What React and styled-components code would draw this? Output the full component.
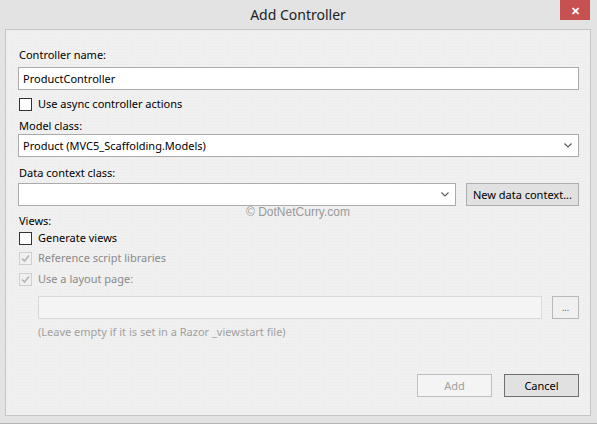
import styled, { createGlobalStyle } from "styled-components";

const GlobalStyle = createGlobalStyle`
  html, body {
    margin: 0;
    padding: 0;
    background: #e3e3e3;
  }
  body {
    font-family: "Noto Sans", "Open Sans", sans-serif;
    font-size: 11px;
    color: #000;
  }
`;

const Chevron = () => (
  <svg width="8" height="5" viewBox="0 0 8 5">
    <path d="M0.5 0.5 L4 4 L7.5 0.5" fill="none" stroke="#606060" strokeWidth="1.2" />
  </svg>
);

const Check = ({ disabled }) => (
  <svg width="11" height="11" viewBox="0 0 11 11">
    <path
      d="M2 5.5 L4.5 8 L9 2.5"
      fill="none"
      stroke={disabled ? "#b4b4b4" : "#333"}
      strokeWidth="1.6"
    />
  </svg>
);

const CheckRow = ({ checked, disabled, children, top }) => (
  <CheckLine top={top}>
    <Box disabled={disabled}>{checked && <Check disabled={disabled} />}</Box>
    <CheckText disabled={disabled}>{children}</CheckText>
  </CheckLine>
);

export default function App() {
  return (
    <>
      <GlobalStyle />
      <Window>
        <TitleBar>
          <Title>Add Controller</Title>
          <Close>✕</Close>
        </TitleBar>
        <Panel>
          <Label top={17}>Controller name:</Label>
          <Field top={4}>ProductController</Field>
          <CheckRow top={7}>Use async controller actions</CheckRow>
          <Label top={7}>Model class:</Label>
          <Select top={0}>
            Product (MVC5_Scaffolding.Models)
            <Chevron />
          </Select>
          <Label top={8}>Data context class:</Label>
          <Row top={2}>
            <Select grow>
              <span />
              <Chevron />
            </Select>
            <Button>New data context...</Button>
          </Row>
          <Watermark>© DotNetCurry.com</Watermark>
          <Label top={7}>Views:</Label>
          <CheckRow top={2}>Generate views</CheckRow>
          <CheckRow top={6} checked disabled>
            Reference script libraries
          </CheckRow>
          <CheckRow top={7} checked disabled>
            Use a layout page:
          </CheckRow>
          <Indent>
            <Row top={10}>
              <Field disabled grow />
              <SmallButton>...</SmallButton>
            </Row>
            <Hint>(Leave empty if it is set in a Razor _viewstart file)</Hint>
          </Indent>
          <Footer>
            <Button disabled wide>
              Add
            </Button>
            <Button dark wide>
              Cancel
            </Button>
          </Footer>
        </Panel>
      </Window>
    </>
  );
}

const Window = styled.div`
  width: 597px;
  height: 424px;
  box-sizing: border-box;
  display: flex;
  flex-direction: column;
  background: #e3e3e3;
  padding: 0 6px 7px 5px;
  border-bottom: 1px solid #b4b4b4;
`;

const TitleBar = styled.div`
  position: relative;
  height: 29px;
  display: flex;
  align-items: center;
  justify-content: center;
`;

const Title = styled.div`
  font-size: 14px;
  color: #222;
  margin-top: -1px;
`;

const Close = styled.div`
  position: absolute;
  top: 0;
  right: 1px;
  width: 30px;
  height: 20px;
  background: #c75050;
  color: #fff;
  font-size: 11px;
  font-weight: bold;
  display: flex;
  align-items: center;
  justify-content: center;
`;

const Panel = styled.div`
  position: relative;
  flex: 1;
  display: flex;
  flex-direction: column;
  border: 1px solid #c6c6c6;
  background-color: #f0f0f0;
  background-image: radial-gradient(#e9e9e9 0.6px, transparent 0.8px);
  background-size: 3px 3px;
  padding: 0 11px 0 12px;
`;

const Label = styled.div`
  margin-top: ${(p) => p.top}px;
  height: 16px;
  line-height: 16px;
  padding-left: 1px;
`;

const Field = styled.div`
  margin-top: ${(p) => p.top || 0}px;
  height: 23px;
  box-sizing: border-box;
  flex: ${(p) => (p.grow ? 1 : "none")};
  border: 1px solid ${(p) => (p.disabled ? "#d9d9d9" : "#ababab")};
  background: ${(p) => (p.disabled ? "#f4f4f4" : "#fff")};
  padding: 0 4px;
  display: flex;
  align-items: center;
`;

const Select = styled(Field)`
  justify-content: space-between;
  padding-right: 6px;
`;

const Row = styled.div`
  margin-top: ${(p) => p.top || 0}px;
  display: flex;
  align-items: flex-end;
  gap: 10px;
`;

const Button = styled.div`
  height: 23px;
  box-sizing: border-box;
  width: ${(p) => (p.wide ? "75px" : "auto")};
  padding: 0 ${(p) => (p.wide ? 0 : "6px")};
  border: 1px solid
    ${(p) => (p.disabled ? "#bfbfbf" : p.dark ? "#707070" : "#adadad")};
  background: ${(p) => (p.disabled ? "#f4f4f4" : "#e1e1e1")};
  color: ${(p) => (p.disabled ? "#a0a0a0" : "#000")};
  display: flex;
  align-items: center;
  justify-content: center;
  white-space: nowrap;
`;

const SmallButton = styled(Button)`
  width: 27px;
  padding: 0;
  background: #f0f0f0;
  color: #555;
  font-size: 9px;
  border-color: #b8b8b8;
`;

const CheckLine = styled.div`
  margin-top: ${(p) => p.top}px;
  height: 14px;
  display: flex;
  align-items: center;
  gap: 6px;
  padding-left: 1px;
`;

const Box = styled.div`
  width: 13px;
  height: 13px;
  box-sizing: border-box;
  border: 1px solid ${(p) => (p.disabled ? "#cfcfcf" : "#333")};
  background: ${(p) => (p.disabled ? "#f0f0f0" : "#fff")};
  display: flex;
  align-items: center;
  justify-content: center;
`;

const CheckText = styled.span`
  color: ${(p) => (p.disabled ? "#8a8a8a" : "#000")};
  line-height: 14px;
`;

const Indent = styled.div`
  padding-left: 20px;
`;

const Hint = styled.div`
  margin-top: 5px;
  color: #a0a0a0;
  line-height: 16px;
`;

const Footer = styled.div`
  margin-top: auto;
  margin-bottom: 18px;
  display: flex;
  justify-content: flex-end;
  gap: 12px;
`;

const Watermark = styled.div`
  position: absolute;
  left: 0;
  right: 0;
  top: 175px;
  text-align: center;
  font-family: "Liberation Sans", Arial, sans-serif;
  font-size: 12px;
  color: #9a9a9a;
`;
